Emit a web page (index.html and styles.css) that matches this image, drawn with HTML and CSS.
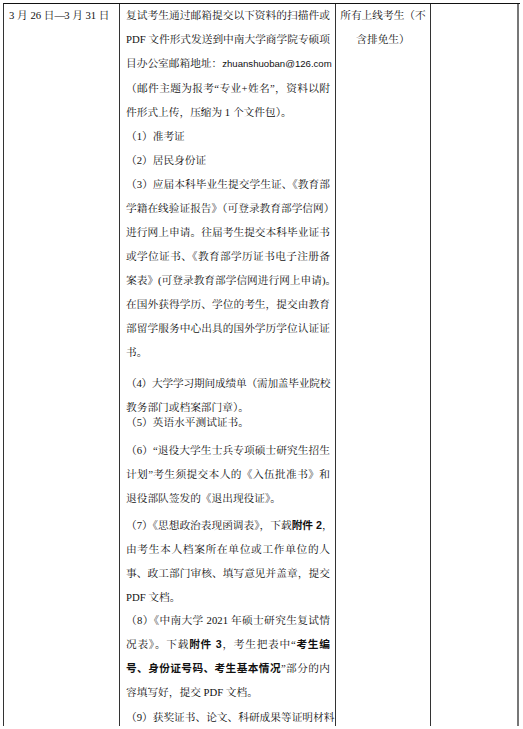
FILE: index.html
```html
<!DOCTYPE html>
<html lang="zh-CN">
<head>
<meta charset="utf-8">
<title>复试材料</title>
<link rel="stylesheet" href="styles.css">
</head>
<body>
<div class="sheet">
  <div class="table">
    <div class="cell c1">
      <div class="date">3 月 26 日<b class="dash">—</b>3 月 31 日</div>
    </div>
    <div class="cell c2">
      <div class="p">
        <div class="l">复试考生通过邮箱提交以下资料的扫描件或</div>
        <div class="l">PDF 文件形式发送到中南大学商学院专硕项</div>
        <div class="e">目办公室邮箱地址：<span class="mail">zhuanshuoban@126.com</span></div>
        <div class="l">（邮件主题为报考“专业+姓名”，资料以附</div>
        <div class="e">件形式上传，压缩为 1 个文件包）。</div>
      </div>
      <div class="p">
        <div class="e">（1）准考证</div>
      </div>
      <div class="p">
        <div class="e">（2）居民身份证</div>
      </div>
      <div class="p">
        <div class="l">（3）应届本科毕业生提交学生证、《教育部</div>
        <div class="l">学籍在线验证报告》（可登录教育部学信网）</div>
        <div class="l">进行网上申请。往届考生提交本科毕业证书</div>
        <div class="l">或学位证书、《教育部学历证书电子注册备</div>
        <div class="l">案表》(可登录教育部学信网进行网上申请)。</div>
        <div class="l">在国外获得学历、学位的考生，提交由教育</div>
        <div class="l">部留学服务中心出具的国外学历学位认证证</div>
        <div class="e">书。</div>
      </div>
      <div class="p p4">
        <div class="l cond">（4）大学学习期间成绩单（需加盖毕业院校</div>
        <div class="e">教务部门或档案部门章）。</div>
      </div>
      <div class="p p5">
        <div class="e">（5）英语水平测试证书。</div>
      </div>
      <div class="p p6">
        <div class="l">（6）“退役大学生士兵专项硕士研究生招生</div>
        <div class="l">计划”考生须提交本人的《入伍批准书》和</div>
        <div class="e">退役部队签发的《退出现役证》。</div>
      </div>
      <div class="p p7">
        <div class="l">（7）《思想政治表现函调表》，下载<strong>附件 2</strong>，</div>
        <div class="l">由考生本人档案所在单位或工作单位的人</div>
        <div class="l">事、政工部门审核、填写意见并盖章，提交</div>
        <div class="e">PDF 文档。</div>
      </div>
      <div class="p p8">
        <div class="l">（8）《中南大学 2021 年硕士研究生复试情</div>
        <div class="l">况表》。下载<strong>附件 3</strong>，考生把表中“<strong>考生编</strong></div>
        <div class="l"><strong>号、身份证号码、考生基本情况</strong>”部分的内</div>
        <div class="e">容填写好，提交 PDF 文档。</div>
      </div>
      <div class="p p9">
        <div class="l">（9）获奖证书、论文、科研成果等证明材料</div>
      </div>
    </div>
    <div class="cell c3">
      <div class="who">所有上线考生（不<br>含排免生）</div>
    </div>
    <div class="cell c4"></div>
  </div>
</div>
</body>
</html>
```

FILE: styles.css
```css
html, body {
  margin: 0;
  padding: 0;
  background: #fff;
}

body {
  font-family: "Liberation Serif", "Noto Serif CJK SC", "Noto Sans CJK SC", serif;
  font-size: 10.7px;
  color: #111;
}

.sheet {
  padding: 3px 0 0 3px;
  width: 520px;
  height: 726px;
  box-sizing: border-box;
}

.table {
  display: grid;
  grid-template-columns: 116px 216px 95px 88px;
  height: 722px;
  border-top: 1px solid #111;
  border-left: 1px solid #333;
  border-bottom: 2px solid #777;
  overflow: hidden;
}

.cell {
  border-right: 1px solid #333;
  overflow: hidden;
}

.c4 {
  border-right: 2px solid #777;
}

.c1 {
  padding: 0 4px 0 5px;
}

.date {
  line-height: 24px;
  margin-top: -1px;
  white-space: nowrap;
}

.dash {
  font-weight: bold;
  letter-spacing: -1px;
}

.c2 {
  padding: 0 5px 0 6px;
}

.p {
  line-height: 24px;
}

.p:first-child {
  margin-top: -1px;
}

.l {
  text-align: justify;
  text-align-last: justify;
  white-space: nowrap;
}

.cond {
  letter-spacing: -0.5px;
}

.e {
  text-align: left;
  white-space: nowrap;
}

.mail {
  font-family: "Liberation Sans", "Noto Sans", sans-serif;
  font-size: 9.6px;
}

strong {
  font-family: "Liberation Sans", "Noto Sans CJK SC", sans-serif;
  font-weight: bold;
}

.p4 { margin-top: 7px; }
.p5 { margin-top: -9px; }
.p6 { margin-top: 4px; }
.p7 { margin-top: 3px; }
.p8 { margin-top: -1px; }
.p9 { margin-top: 1px; }

.c3 {
  padding: 0 4px;
}

.who {
  line-height: 24px;
  margin-top: -1px;
  text-align: center;
  white-space: nowrap;
}
```
